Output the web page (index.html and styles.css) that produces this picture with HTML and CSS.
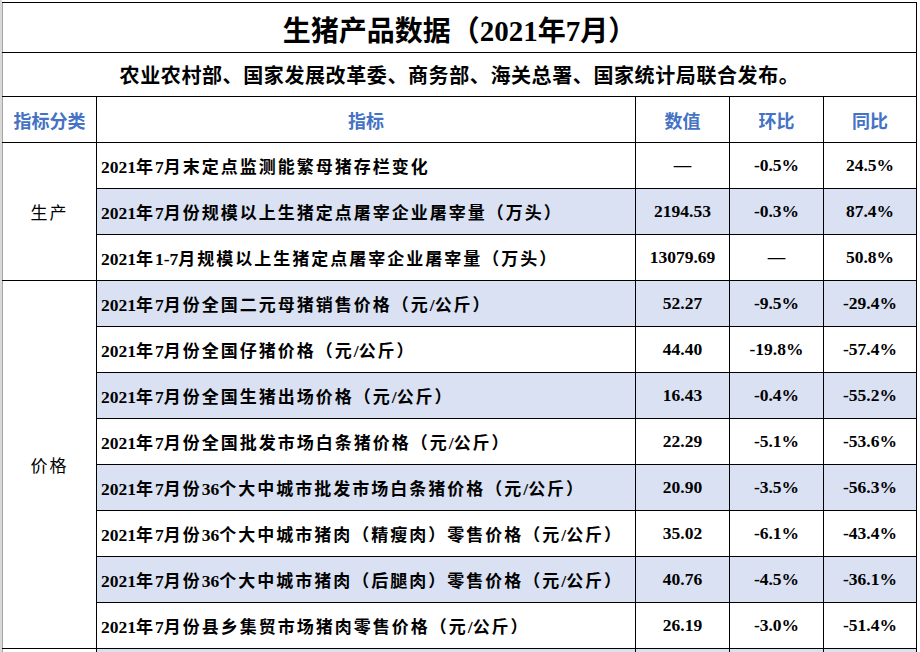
FILE: index.html
```html
<!DOCTYPE html>
<html lang="zh-CN">
<head>
<meta charset="utf-8">
<title>生猪产品数据（2021年7月）</title>
<link rel="stylesheet" href="styles.css">
</head>
<body>
<div class="sheet">
<table class="data">
  <colgroup>
    <col class="c-cat">
    <col class="c-item">
    <col class="c-num">
    <col class="c-num">
    <col class="c-num2">
  </colgroup>
  <tr class="r-title">
    <td colspan="5" class="title">生猪产品数据<span class="n">（2021</span>年<span class="n">7</span>月）</td>
  </tr>
  <tr class="r-sub">
    <td colspan="5" class="sub">农业农村部、国家发展改革委、商务部、海关总署、国家统计局联合发布。</td>
  </tr>
  <tr class="r-row">
    <td class="head first">指标分类</td>
    <td class="head">指标</td>
    <td class="head">数值</td>
    <td class="head">环比</td>
    <td class="head">同比</td>
  </tr>
  <tr class="r-row">
    <td class="cat first" rowspan="3">生产</td>
    <td class="item"><span class="n">2021</span>年<span class="n">7</span>月末定点监测能繁母猪存栏变化</td>
    <td class="num">—</td>
    <td class="num">-0.5%</td>
    <td class="num">24.5%</td>
  </tr>
  <tr class="r-row alt">
    <td class="item"><span class="n">2021</span>年<span class="n">7</span>月份规模以上生猪定点屠宰企业屠宰量（万头）</td>
    <td class="num">2194.53</td>
    <td class="num">-0.3%</td>
    <td class="num">87.4%</td>
  </tr>
  <tr class="r-row">
    <td class="item"><span class="n">2021</span>年<span class="n">1-7</span>月规模以上生猪定点屠宰企业屠宰量（万头）</td>
    <td class="num">13079.69</td>
    <td class="num">—</td>
    <td class="num">50.8%</td>
  </tr>
  <tr class="r-row alt">
    <td class="cat first" rowspan="8">价格</td>
    <td class="item"><span class="n">2021</span>年<span class="n">7</span>月份全国二元母猪销售价格（元<span class="n">/</span>公斤）</td>
    <td class="num">52.27</td>
    <td class="num">-9.5%</td>
    <td class="num">-29.4%</td>
  </tr>
  <tr class="r-row">
    <td class="item"><span class="n">2021</span>年<span class="n">7</span>月份全国仔猪价格（元<span class="n">/</span>公斤）</td>
    <td class="num">44.40</td>
    <td class="num">-19.8%</td>
    <td class="num">-57.4%</td>
  </tr>
  <tr class="r-row alt">
    <td class="item"><span class="n">2021</span>年<span class="n">7</span>月份全国生猪出场价格（元<span class="n">/</span>公斤）</td>
    <td class="num">16.43</td>
    <td class="num">-0.4%</td>
    <td class="num">-55.2%</td>
  </tr>
  <tr class="r-row">
    <td class="item"><span class="n">2021</span>年<span class="n">7</span>月份全国批发市场白条猪价格（元<span class="n">/</span>公斤）</td>
    <td class="num">22.29</td>
    <td class="num">-5.1%</td>
    <td class="num">-53.6%</td>
  </tr>
  <tr class="r-row alt">
    <td class="item"><span class="n">2021</span>年<span class="n">7</span>月份<span class="n">36</span>个大中城市批发市场白条猪价格（元<span class="n">/</span>公斤）</td>
    <td class="num">20.90</td>
    <td class="num">-3.5%</td>
    <td class="num">-56.3%</td>
  </tr>
  <tr class="r-row">
    <td class="item"><span class="n">2021</span>年<span class="n">7</span>月份<span class="n">36</span>个大中城市猪肉（精瘦肉）零售价格（元<span class="n">/</span>公斤）</td>
    <td class="num">35.02</td>
    <td class="num">-6.1%</td>
    <td class="num">-43.4%</td>
  </tr>
  <tr class="r-row alt">
    <td class="item"><span class="n">2021</span>年<span class="n">7</span>月份<span class="n">36</span>个大中城市猪肉（后腿肉）零售价格（元<span class="n">/</span>公斤）</td>
    <td class="num">40.76</td>
    <td class="num">-4.5%</td>
    <td class="num">-36.1%</td>
  </tr>
  <tr class="r-row">
    <td class="item"><span class="n">2021</span>年<span class="n">7</span>月份县乡集贸市场猪肉零售价格（元<span class="n">/</span>公斤）</td>
    <td class="num">26.19</td>
    <td class="num">-3.0%</td>
    <td class="num">-51.4%</td>
  </tr>
  <tr class="r-row alt">
    <td class="cat first"></td>
    <td class="item"></td>
    <td class="num"></td>
    <td class="num"></td>
    <td class="num"></td>
  </tr>
</table>
</div>
</body>
</html>
```
FILE: styles.css
```css
html, body {
  margin: 0;
  padding: 0;
  background: #ffffff;
  overflow: hidden;
}

.sheet {
  height: 650px;
  padding-top: 2px;
  border-left: 2px solid #d9d9d9;
  overflow: hidden;
}

.data {
  border-collapse: collapse;
  table-layout: fixed;
  width: 915px;
  color: #000;
  font-family: "Liberation Serif", "Noto Sans CJK SC", serif;
}

.c-cat { width: 94px; }
.c-item { width: 539px; }
.c-num { width: 94px; }
.c-num2 { width: 93px; }

.data td {
  border: 1px solid #000;
  padding: 0;
  vertical-align: middle;
  white-space: nowrap;
  overflow: hidden;
}

.data td.first,
.data td.title,
.data td.sub {
  border-left-color: #a6a6a6;
}

.r-title { height: 50px; }
.r-sub { height: 44px; }
.r-row { height: 46px; }

.title {
  text-align: center;
  font-size: 28px;
  font-weight: bold;
  padding-right: 18px;
}

.title .n {
  font-size: 29px;
}

.sub {
  text-align: center;
  font-family: "Noto Sans CJK SC", sans-serif;
  font-weight: bold;
  font-size: 20px;
  letter-spacing: 0.6px;
  padding-right: 10px;
}

.head {
  text-align: center;
  color: #4472c4;
  font-family: "Noto Sans CJK SC", sans-serif;
  font-weight: bold;
  font-size: 18px;
}

.cat {
  text-align: center;
  font-size: 17px;
  letter-spacing: 2px;
  padding-left: 2px;
}

.item {
  text-align: left;
  padding-left: 4px !important;
  font-size: 17px;
  font-weight: bold;
  letter-spacing: 2px;
}

.item .n {
  font-size: 17.5px;
  letter-spacing: 0;
}

.num {
  text-align: center;
  font-size: 17.5px;
  font-weight: bold;
}

.alt .item,
.alt .num {
  background: #d9e1f2;
}
```
